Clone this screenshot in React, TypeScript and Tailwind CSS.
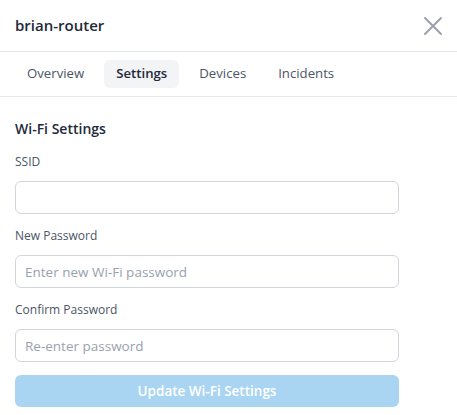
import React from "react";

export default function App() {
  const font = { fontFamily: '"Segoe UI", "Open Sans", "Noto Sans", sans-serif' };
  return (
    <div className="w-[457px] h-[415px] bg-white overflow-hidden text-gray-800" style={font}>
      <div className="h-[52px] flex items-center justify-between pl-[15px] pr-[14px] border-b border-gray-200">
        <h2 className="text-[15px] font-semibold text-gray-800">brian-router</h2>
        <button className="text-gray-400 w-[20px] h-[20px] flex items-center justify-center">
          <svg width="20" height="20" viewBox="0 0 20 20" fill="none" stroke="currentColor" strokeWidth="2" strokeLinecap="round">
            <path d="M2 2 L18 18 M18 2 L2 18" />
          </svg>
        </button>
      </div>
      <div className="h-[45px] flex items-center gap-[8px] pl-[15px] border-b border-gray-200">
        {["Overview", "Settings", "Devices", "Incidents"].map((t) => (
          <div
            key={t}
            className={
              t === "Settings"
                ? "h-[28px] px-[12px] flex items-center rounded-md bg-gray-100 text-[13.2px] font-semibold text-gray-800"
                : "h-[28px] px-[12px] flex items-center rounded-md text-[13.2px] text-gray-600"
            }
          >
            {t}
          </div>
        ))}
      </div>
      <div className="px-[15px] pt-[22px]">
        <div className="max-w-[384px]">
          <h3 className="text-[14px] font-semibold text-gray-800 leading-[20px]">Wi-Fi Settings</h3>
          <label className="block mt-[14px] text-[12px] text-gray-600 leading-[18px]">SSID</label>
          <input className="mt-[10px] block w-full h-[33px] rounded-md border border-gray-300 px-[12px] text-[14px] outline-none" />
          <label className="block mt-[13px] text-[12px] text-gray-600 leading-[18px]">New Password</label>
          <input
            type="password"
            placeholder="Enter new Wi-Fi password"
            className="mt-[10px] block w-full h-[33px] rounded-md border border-gray-300 px-[9px] text-[13.5px] placeholder:text-gray-400 outline-none"
          />
          <label className="block mt-[13px] text-[12px] text-gray-600 leading-[18px]">Confirm Password</label>
          <input
            type="password"
            placeholder="Re-enter password"
            className="mt-[10px] block w-full h-[33px] rounded-md border border-gray-300 px-[9px] text-[13.5px] placeholder:text-gray-400 outline-none"
          />
          <button className="mt-[13px] w-full h-[32px] rounded-md bg-[#a9d5f3] text-white text-[13.5px] font-semibold">
            Update Wi-Fi Settings
          </button>
        </div>
      </div>
    </div>
  );
}
